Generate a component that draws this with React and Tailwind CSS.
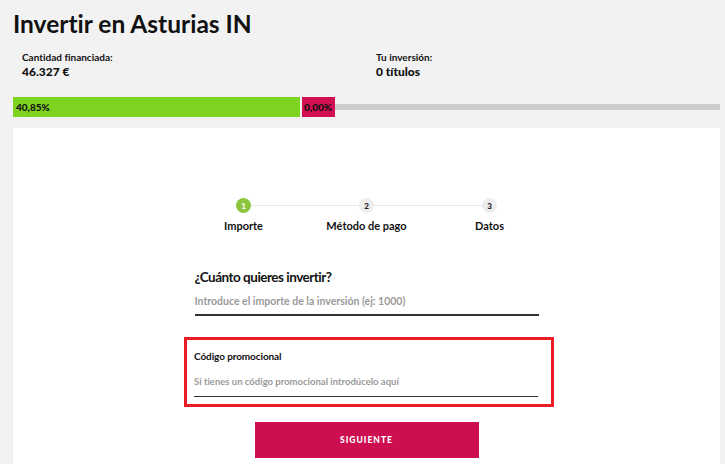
export default function App() {
  const steps = [
    { n: 1, label: "Importe", active: true },
    { n: 2, label: "Método de pago" },
    { n: 3, label: "Datos" },
  ];
  return (
    <div
      className="w-[725px] h-[464px] overflow-hidden bg-[#f2f2f2] text-[#111] [font-variant-ligatures:none]"
      style={{ fontFamily: "Lato, 'Noto Sans', sans-serif" }}
    >
      <h1 className="pl-[13px] pt-[9px] text-[24.5px] leading-[30px] font-bold">
        Invertir en Asturias IN
      </h1>

      <div className="flex pt-[12px] pl-[22px]">
        <div className="w-[354px]">
          <div className="text-[10px] leading-[13px] font-bold">Cantidad financiada:</div>
          <div className="text-[12px] leading-[16px] font-black">46.327 €</div>
        </div>
        <div>
          <div className="text-[10px] leading-[13px] font-bold">Tu inversión:</div>
          <div className="text-[12px] leading-[16px] font-black">0 títulos</div>
        </div>
      </div>

      <div className="flex items-center mt-[17px] ml-[13px] w-[707px] h-[20px]">
        <div className="w-[287px] h-full bg-[#7ed321] flex items-center pl-[3px] text-[10px] font-black">
          40,85%
        </div>
        <div className="ml-[2px] w-[33px] h-full bg-[#d10f52] flex items-center pl-[2px] text-[10px] font-black">
          0,00%
        </div>
        <div className="flex-1 h-[6px] bg-[#cccccc]" />
      </div>

      <div className="mt-[11px] ml-[13px] w-[707px] h-[400px] bg-white pt-[70px]">
        <div className="mx-auto w-[369px] grid grid-cols-3">
          {steps.map((s, i) => (
            <div key={s.n} className="relative flex flex-col items-center">
              {i > 0 && (
                <div className="absolute top-[7px] left-0 w-1/2 h-px bg-[#e6e6e6]" />
              )}
              {i < steps.length - 1 && (
                <div className="absolute top-[7px] right-0 w-1/2 h-px bg-[#e6e6e6]" />
              )}
              <div
                className={
                  "relative z-10 w-[15px] h-[15px] rounded-full flex items-center justify-center text-[8px] font-black " +
                  (s.active ? "bg-[#8cc63e] text-white" : "bg-[#ededed] text-[#222]")
                }
              >
                {s.n}
              </div>
              <div className="mt-[6px] text-[11px] leading-[14px] font-bold">{s.label}</div>
            </div>
          ))}
        </div>

        <div className="mx-auto w-[344px] mt-[35px]">
          <div className="text-[13.5px] leading-[18px] font-bold tracking-[-0.5px]">
            ¿Cuánto quieres invertir?
          </div>
          <div className="mt-[8px] pb-[6px] border-b-2 border-[#333] text-[10.5px] leading-[14px] font-bold text-[#9a9a9a]">
            Introduce el importe de la inversión (ej: 1000)
          </div>
        </div>

        <div className="ml-[171px] mt-[21px] w-[370px] h-[70px] border-[3px] border-[#ec1c24] pt-[9px] px-[7px]">
          <div className="text-[10px] leading-[14px] font-bold tracking-[-0.1px]">Código promocional</div>
          <div className="mt-[13px] pb-[8px] w-[344px] border-b border-[#333] text-[9.5px] leading-[12px] font-bold text-[#9a9a9a]">
            Si tienes un código promocional introdúcelo aquí
          </div>
        </div>

        <div className="mx-auto mt-[15px] w-[224px] h-[36px] bg-[#cd0e51] flex items-center justify-center text-white text-[8.5px] font-black tracking-[1px]">
          SIGUIENTE
        </div>
      </div>
    </div>
  );
}
